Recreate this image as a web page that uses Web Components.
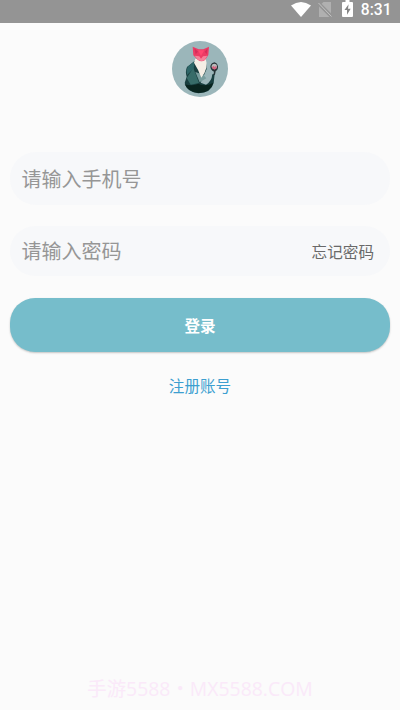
<!DOCTYPE html>
<html lang="zh-CN">
<head>
<meta charset="utf-8">
<title>登录</title>
<style>
html,body{margin:0;height:100%;background:#fbfbfb}
body{font-family:"Noto Sans CJK SC",sans-serif;overflow:hidden}
</style>
</head>
<body>
<login-page></login-page>
<script>
function define(name, html) {
  const t = document.createElement('template');
  t.innerHTML = html;
  customElements.define(name, class extends HTMLElement {
    constructor() {
      super();
      this.attachShadow({mode: 'open'}).append(t.content.cloneNode(true));
    }
  });
}
define('status-bar', `<style>
:host{display:flex;height:23px;box-sizing:border-box;background:#949494;align-items:flex-start;justify-content:flex-end;padding-right:8.5px;color:#fff;font:500 15.6px/20px Roboto,sans-serif}
svg{display:block}
.wifi{margin:2px 7px 0 0}.sim{margin:1px 10px 0 0}.bat{margin:0 8px 0 0}
</style>
<svg class="wifi" width="20" height="15" viewBox="0 0 20 15"><path d="M0 3.6Q10-3.6 20 3.6L10 15Z" fill="#fff"/></svg>
<svg class="sim" width="14" height="17" viewBox="0 0 14 17"><path d="M5.5 1H13V12.3L3.6 2.8ZM1 5.5L11.5 16H1Z" fill="#b0b0b0"/><path d="M0.5 2L13.5 15.5" stroke="#c4c4c4" stroke-width="1"/></svg>
<svg class="bat" width="11" height="17" viewBox="0 0 11 17"><path d="M3.5 0H7.5V2H10Q11 2 11 3V16Q11 17 10 17H1Q0 17 0 16V3Q0 2 1 2H3.5Z" fill="#fff"/><path d="M6.6 4.3L2.5 10H5V14.8L8.7 8.7H6Z" fill="#858585"/></svg>
<slot></slot>`);
define('fox-avatar', `<style>:host{display:block;width:56px;height:56px}svg{display:block}</style>
<svg width="56" height="56" viewBox="20 17 168 168">
<circle cx="104" cy="101" r="84" fill="#9bb6ba"/>
<path d="M88 77L65 95Q59 109 64 124L58 143Q64 170 99 174Q137 173 145 143L148 116L141 117Q139 139 122 148L106 142L124 101L121 73Z" fill="#193f40"/>
<path d="M88 77L67 94Q62 105 65 119L85 100Z" fill="#2e6668"/>
<path d="M84 98L64 128L76 148L101 143Z" fill="#376c69"/>
<path d="M90 110L103 141L123 129L114 118Z" fill="#789d9d"/>
<path d="M58 147Q79 154 99 145Q119 156 144 142Q137 171 101 173Q69 171 58 147Z" fill="#09241f"/>
<path d="M90 70L121 70Q131 98 108 127Q99 102 86 82Z" fill="#f5eee5"/>
<path d="M82 34L100 42H114L131 34L129 59L119 74Q108 82 97 73L84 60Z" fill="#ec3c65"/>
<path d="M87 39L98 49L91 57ZM127 39L118 49L124 56Z" fill="#d62c5a"/>
<path d="M88 61L102 63L107 70L113 63L126 61L118 74Q108 81 98 73Z" fill="#f5829a"/>
<path d="M98 45L107 62L117 45Z" fill="#ff4770"/>
<path d="M148 81Q137 83 135 93Q135 105 146 109L144 120L149 118L151 108Q159 103 158 93Q157 84 148 81Z" fill="#273437"/>
<circle cx="147" cy="93" r="8" fill="#b8bbba"/><path d="M139 97L144 91L148 95L153 91L154 99L147 103Z" fill="#d46580"/>
</svg>`);
define('input-field', `<style>
:host{display:flex;box-sizing:border-box;align-items:center;justify-content:space-between;height:var(--h,53px);border-radius:26px;background:#f7f8fa;padding:0 16px 0 11.5px;color:#969696;font-size:20px;line-height:30px}
::slotted([slot=action]){font-size:15.6px;color:#696969;padding-bottom:1px}
</style><slot></slot><slot name="action"></slot>`);
define('primary-button', `<style>
:host{display:flex;height:54px;box-sizing:border-box;padding-bottom:1px;align-items:center;justify-content:center;border-radius:25px;background:#76bdcb;color:#fff;font-size:15.6px;font-weight:700;box-shadow:0 1px 2px rgba(0,0,0,.22)}
</style><slot></slot>`);
define('login-page', `<style>
:host{display:flex;flex-direction:column;height:710px;background:#fbfbfb}
main{flex:1;display:flex;flex-direction:column;padding:18px 10px 0}
fox-avatar{align-self:center;margin-bottom:55px}
.pw{--h:50px;margin:21px 0 22px}
.reg{align-self:center;color:#3d9fd0;font-size:15.6px;line-height:24px;margin-top:21px}
footer{text-align:center;color:#fae9f9;font:19.4px/28px "Open Sans","Noto Sans CJK SC",sans-serif;padding-bottom:7px;white-space:nowrap}
</style>
<status-bar>8:31</status-bar>
<main><fox-avatar></fox-avatar>
<input-field>请输入手机号</input-field>
<input-field class="pw">请输入密码<span slot="action">忘记密码</span></input-field>
<primary-button>登录</primary-button>
<span class="reg">注册账号</span></main>
<footer>手游5588・MX5588.COM</footer>`);
</script>
</body>
</html>
